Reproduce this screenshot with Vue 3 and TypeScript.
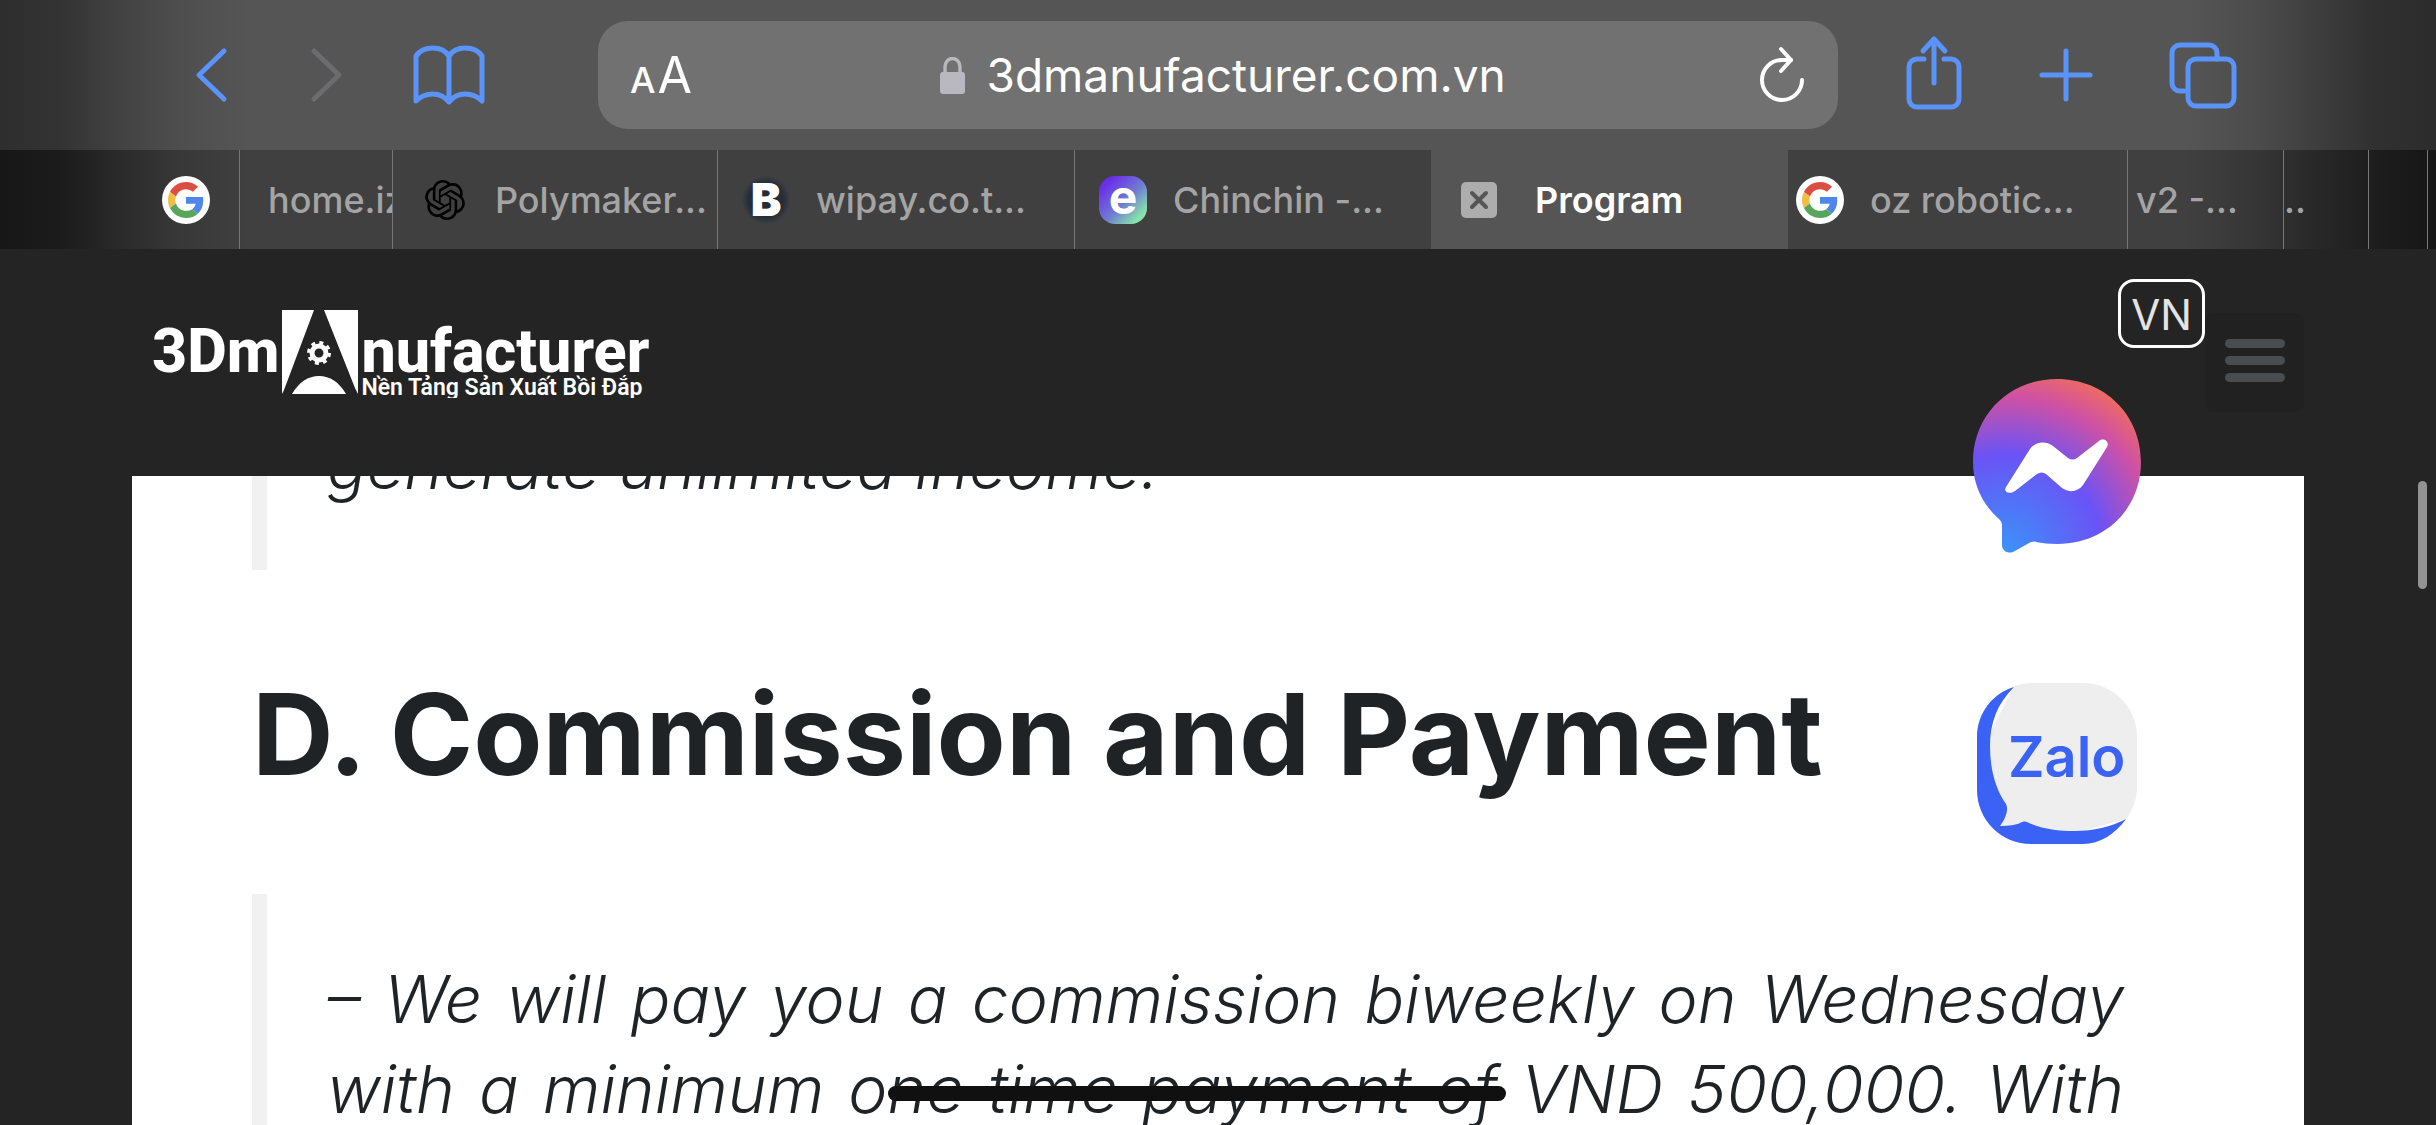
<script setup lang="ts">
interface Tab {
  title: string
  icon?: 'google' | 'openai' | 'b' | 'e' | 'close'
  kind?: string
}

const tabs: Tab[] = [
  { title: '', icon: 'google', kind: 'pinned' },
  { title: 'home.iz', kind: 'cut' },
  { title: 'Polymaker...', icon: 'openai', kind: 'inset' },
  { title: 'wipay.co.t...', icon: 'b' },
  { title: 'Chinchin -...', icon: 'e' },
  { title: 'Program', icon: 'close', kind: 'active' },
  { title: 'oz robotic...', icon: 'google', kind: 'tight' },
  { title: 'v2 -...', kind: 'tight' },
  { title: '..', kind: 'flush' },
  { title: '', kind: 'flush' },
  { title: '', kind: 'flush' },
]

const url = '3dmanufacturer.com.vn'
</script>

<template>
  <div class="screen">
    <header class="toolbar">
      <nav class="group left" aria-label="History">
        <button type="button" aria-label="Back">
          <svg width="40" height="60" viewBox="0 0 40 60"><path d="M32 6 7 30l25 24" /></svg>
        </button>
        <button type="button" aria-label="Forward" class="off" disabled>
          <svg width="40" height="60" viewBox="0 0 40 60"><path d="m7 6 25 24L7 54" /></svg>
        </button>
        <button type="button" aria-label="Bookmarks" class="wide">
          <svg width="76" height="64" viewBox="0 0 76 64">
            <path d="M37 59V13C33 7 27 5 21 5S8 7 4 13v45c4-4 10-7 17-7s12 3 16 8c4-5 9-8 16-8s13 3 17 7V13c-4-6-11-8-17-8s-12 2-16 8" />
          </svg>
        </button>
      </nav>

      <div class="field">
        <button type="button" class="reader" aria-label="Page settings"><span class="small-a">A</span><span class="big-a">A</span></button>
        <label class="address">
          <svg class="lock" width="25" height="37" viewBox="0 0 25 37" aria-hidden="true">
            <rect y="15" width="25" height="22" rx="3" fill="#b9b8bf" />
            <path d="M5 17v-7a7 8 0 0 1 15 0v7" fill="none" stroke="#b9b8bf" stroke-width="3.4" />
          </svg>
          <input type="text" :value="url" aria-label="Address" readonly />
        </label>
        <button type="button" class="reload" aria-label="Reload">
          <svg width="48" height="60" viewBox="0 0 48 60">
            <path d="M44 35a20 20 0 1 1-20-20h9" />
            <path d="m23 4 10 11-10 11" />
          </svg>
        </button>
      </div>

      <nav class="group right" aria-label="Page actions">
        <button type="button" aria-label="Share">
          <svg width="64" height="80" viewBox="0 0 64 80">
            <path d="M22 24h-7a8 8 0 0 0-8 8v32a8 8 0 0 0 8 8h34a8 8 0 0 0 8-8V32a8 8 0 0 0-8-8h-7" />
            <path d="M32 4v44M21 16 32 4l11 12" />
          </svg>
        </button>
        <button type="button" aria-label="New tab">
          <svg width="60" height="60" viewBox="0 0 60 60"><path d="M28 6v48M4 30h48" /></svg>
        </button>
        <button type="button" aria-label="Show tabs">
          <svg width="72" height="72" viewBox="0 0 72 72">
            <path d="M18 52h-4a8 8 0 0 1-8-8V14a8 8 0 0 1 8-8h29a8 8 0 0 1 8 8v6" />
            <rect x="22" y="20" width="46" height="47" rx="8" />
          </svg>
        </button>
      </nav>
    </header>

    <nav class="tabs" aria-label="Open tabs">
      <div v-for="(tab, i) in tabs" :key="i" class="tab" :class="tab.kind">
        <span v-if="tab.icon" class="slot">
          <svg v-if="tab.icon === 'google'" width="48" height="48" viewBox="0 0 48 48" aria-hidden="true">
            <circle cx="24" cy="24" r="24" fill="#fff" />
            <g transform="translate(6 6) scale(.75)">
              <path fill="#dc4e41" d="M24 9.5c3.54 0 6.71 1.22 9.21 3.6l6.85-6.85C35.9 2.38 30.47 0 24 0 14.62 0 6.51 5.38 2.56 13.22l7.98 6.19C12.43 13.72 17.74 9.5 24 9.5z" />
              <path fill="#4f86ec" d="M46.98 24.55c0-1.57-.15-3.09-.38-4.55H24v9.02h12.94c-.58 2.96-2.26 5.48-4.78 7.18l7.73 6c4.51-4.18 7.09-10.36 7.09-17.65z" />
              <path fill="#f2be42" d="M10.53 28.59c-.48-1.45-.76-2.99-.76-4.59s.27-3.14.76-4.59l-7.98-6.19C.92 16.46 0 20.12 0 24c0 3.88.92 7.54 2.56 10.78l7.97-6.19z" />
              <path fill="#58a55c" d="M24 48c6.48 0 11.93-2.13 15.89-5.81l-7.73-6c-2.15 1.45-4.92 2.3-8.16 2.3-6.26 0-11.57-4.22-13.47-9.91l-7.98 6.19C6.51 42.62 14.62 48 24 48z" />
            </g>
          </svg>
          <svg v-else-if="tab.icon === 'openai'" width="40" height="40" viewBox="0 0 24 24" aria-hidden="true">
            <path d="M22.2819 9.8211a5.9847 5.9847 0 0 0-.5157-4.9108 6.0462 6.0462 0 0 0-6.5098-2.9A6.0651 6.0651 0 0 0 4.9807 4.1818a5.9847 5.9847 0 0 0-3.9977 2.9 6.0462 6.0462 0 0 0 .7427 7.0966 5.98 5.98 0 0 0 .511 4.9107 6.051 6.051 0 0 0 6.5146 2.9001A5.9847 5.9847 0 0 0 13.2599 24a6.0557 6.0557 0 0 0 5.7718-4.2058 5.9894 5.9894 0 0 0 3.9977-2.9001 6.0557 6.0557 0 0 0-.7475-7.0729zm-9.022 12.6081a4.4755 4.4755 0 0 1-2.8764-1.0408l.1419-.0804 4.7783-2.7582a.7948.7948 0 0 0 .3927-.6813v-6.7369l2.02 1.1686a.071.071 0 0 1 .038.052v5.5826a4.504 4.504 0 0 1-4.4945 4.4944zm-9.6607-4.1254a4.4708 4.4708 0 0 1-.5346-3.0137l.142.0852 4.783 2.7582a.7712.7712 0 0 0 .7806 0l5.8428-3.3685v2.3324a.0804.0804 0 0 1-.0332.0615L9.74 19.9502a4.4992 4.4992 0 0 1-6.1408-1.6464zM2.3408 7.8956a4.485 4.485 0 0 1 2.3655-1.9728V11.6a.7664.7664 0 0 0 .3879.6765l5.8144 3.3543-2.0201 1.1685a.0757.0757 0 0 1-.071 0l-4.8303-2.7865A4.504 4.504 0 0 1 2.3408 7.8956zm16.5963 3.8558L13.1038 8.364 15.1192 7.2a.0757.0757 0 0 1 .071 0l4.8303 2.7913a4.4944 4.4944 0 0 1-.6765 8.1042v-5.6772a.79.79 0 0 0-.407-.667zm2.0107-3.0231l-.142-.0852-4.7735-2.7818a.7759.7759 0 0 0-.7854 0L9.409 9.2297V6.8974a.0662.0662 0 0 1 .0284-.0615l4.8303-2.7866a4.4992 4.4992 0 0 1 6.6802 4.66zM8.3065 12.863l-2.02-1.1638a.0804.0804 0 0 1-.038-.0567V6.0742a4.4992 4.4992 0 0 1 7.3757-3.4537l-.142.0805L8.704 5.459a.7948.7948 0 0 0-.3927.6813zm1.0976-2.3654l2.602-1.4998 2.6069 1.4998v2.9994l-2.5974 1.4997-2.6067-1.4997Z" />
          </svg>
          <span v-else-if="tab.icon === 'b'" class="badge-b">B</span>
          <span v-else-if="tab.icon === 'e'" class="badge-e">e</span>
          <button v-else type="button" class="close" aria-label="Close tab">
            <svg width="36" height="36" viewBox="0 0 36 36"><path d="m11 11 14 14M25 11 11 25" /></svg>
          </button>
        </span>
        <a v-if="tab.title" href="#" class="title">{{ tab.title }}</a>
      </div>
    </nav>

    <div class="site">
      <header class="site-head">
        <a href="#" class="logo">
          <span class="word">3Dm</span>
          <svg width="76" height="84" viewBox="0 0 76 84" aria-hidden="true">
            <path fill="#fff" d="M0 0h32L2 80 0 84zM42 0h34v84l-3-6z" />
            <path fill="#fff" d="M10 84c7-12 16-18 27-18s20 6 27 18z" />
            <circle cx="37" cy="43" r="7" fill="none" stroke="#fff" stroke-width="5" />
            <circle cx="37" cy="43" r="10.5" fill="none" stroke="#fff" stroke-width="3" stroke-dasharray="4 4.25" />
          </svg>
          <span class="stack">
            <span class="word">nufacturer</span>
            <span class="tagline">Nền Tảng Sản Xuất Bồi Đắp</span>
          </span>
        </a>
        <div class="tools">
          <a href="#" class="lang">VN</a>
          <button type="button" class="menu" aria-label="Menu"><i></i><i></i><i></i></button>
        </div>
      </header>

      <main class="page">
        <blockquote class="first"><p>generate unlimited income.</p></blockquote>
        <h2>D. Commission and Payment</h2>
        <blockquote>
          <p class="full">– We will pay you a commission biweekly on Wednesday</p>
          <p class="full">with a minimum <span class="struck">one time payment of</span> VND 500,000. With</p>
        </blockquote>
      </main>

      <a href="#" class="chat messenger" aria-label="Messenger">
        <svg width="168" height="174" viewBox="0 0 168 174">
          <defs>
            <radialGradient id="msg" gradientUnits="userSpaceOnUse" cx="32" cy="172" r="186">
              <stop offset="0" stop-color="#3b92f8" />
              <stop offset=".52" stop-color="#6a53f6" />
              <stop offset=".83" stop-color="#cf51a4" />
              <stop offset="1" stop-color="#ec6a64" />
            </radialGradient>
          </defs>
          <path fill="url(#msg)" d="M84 0c48 0 84 36 84 83s-36 82-84 82c-8 0-15-1-21-2-2-1-3 0-5 0l-18 10c-5 2-11-1-11-7v-20c0-2-1-4-3-6C9 125 0 105 0 83 0 36 36 0 84 0z" />
          <path fill="#fff" d="M33 108 57 70c5-7 15-9 23-3l15 12c3 2 6 2 9 0l22-17c5-4 11 1 8 6l-24 38c-5 7-14 8-21 3L73 95c-3-2-6-2-9 0l-22 17c-6 4-12 1-9-4z" />
        </svg>
      </a>
      <a href="#" class="chat zalo" aria-label="Zalo chat">
        <svg width="160" height="161" viewBox="0 0 160 161">
          <path fill="#eee" d="M54 0h52a54 54 0 0 1 54 54v53a54 54 0 0 1-11 29L80 155 20 146 8 60 37 3A54 54 0 0 1 54 0z" />
          <path fill="#3a62f5" d="M37 4C20 21 13 40 13 63c0 24 6 44 16 58 3 6-1 16-6 22 9 0 16-1 20-3 4-2 5-2 9 0 14 6 28 8 46 8 18 0 36-4 51-12-11 15-26 25-43 25H54A54 54 0 0 1 0 107V54C0 30 16 10 37 4z" />
          <text x="31" y="94">Zalo</text>
        </svg>
      </a>
      <span class="thumb"></span>
    </div>
  </div>
</template>

<style>
body {
  margin: 0;
  background: #242424;
}
</style>

<style scoped>
.screen {
  display: flex;
  flex-direction: column;
  height: 100vh;
  overflow: hidden;
  background: #242424;
  font-family: Inter, 'Liberation Sans', sans-serif;
}

a {
  color: inherit;
  text-decoration: none;
}

button {
  display: flex;
  align-items: center;
  justify-content: center;
  padding: 0;
  border: 0;
  background: none;
  color: inherit;
  font: inherit;
}

svg {
  display: block;
  flex: none;
}

/* Browser toolbar */
.toolbar {
  display: grid;
  grid-template-columns: 598px 1fr 598px;
  align-items: center;
  flex: none;
  height: 150px;
  background:
    linear-gradient(to right, #2e2e2e, #333 60px, #424242 120px, #4e4e4e 180px, #555 250px, transparent 250px),
    linear-gradient(to left, #2c2c2c, #303030 60px, #3e3e3e 120px, #4c4c4c 180px, #555 250px, transparent 250px),
    #555;
}

.group {
  display: flex;
  align-items: center;
}

.group button {
  width: 80px;
  height: 96px;
}

.group .wide {
  width: 96px;
}

.left {
  gap: 35px;
  padding-left: 172px;
}

.right {
  gap: 54px;
  padding-left: 56px;
}

.toolbar button svg {
  fill: none;
  stroke: #5a93fa;
  stroke-width: 5;
  stroke-linecap: round;
  stroke-linejoin: round;
}

.toolbar .off svg {
  stroke: #6c6c6f;
}

.toolbar .reload svg {
  stroke: #fff;
  stroke-width: 4;
}

.field {
  display: flex;
  align-items: center;
  box-sizing: border-box;
  height: 108px;
  padding: 0 32px;
  border-radius: 30px;
  background: #717171;
  color: #fff;
}

.reader {
  align-items: baseline;
  gap: 2px;
  width: 62px;
}

.small-a {
  font-size: 36px;
  font-weight: 500;
}

.big-a {
  font-size: 50px;
}

.reload {
  justify-content: flex-end;
  width: 52px;
}

.address {
  display: flex;
  flex: 1;
  align-items: center;
  justify-content: center;
  gap: 22px;
}

.address input {
  width: 520px;
  padding: 0;
  border: 0;
  outline: 0;
  background: none;
  color: #fff;
  font: 400 46px/60px Inter, 'Liberation Sans', sans-serif;
}

/* Tab strip */
.tabs {
  display: grid;
  grid-template-columns:
    minmax(0, 240fr) minmax(0, 153fr) minmax(0, 325fr) minmax(0, 357fr) minmax(0, 356fr) minmax(0, 357fr)
    minmax(0, 340fr) minmax(0, 156fr) minmax(0, 85fr) minmax(0, 59fr) minmax(0, 8fr);
  flex: none;
  height: 99px;
  background:
    linear-gradient(to right, #171717, #1b1b1b 60px, #2a2a2a 120px, #383838 180px, #404040 250px, transparent 250px),
    linear-gradient(to left, #161616, #1d1d1d 60px, #282828 120px, #363636 180px, #404040 250px, transparent 250px),
    #404040;
}

.tab {
  display: flex;
  align-items: center;
  gap: 26px;
  box-sizing: border-box;
  min-width: 0;
  overflow: hidden;
  padding-left: 24px;
  border-right: 1px solid #777;
  color: #a4a4a4;
}

.tab:last-child {
  border-right: 0;
}

.pinned {
  padding-left: 162px;
}

.inset,
.cut {
  padding-left: 28px;
}

.tight {
  padding-left: 8px;
}

.flush {
  padding-left: 0;
}

.active {
  gap: 32px;
  border-right: 0;
  background: #555;
  color: #fff;
}

.tab:has(+ .active) {
  border-right: 0;
}

.slot {
  display: flex;
  flex: none;
  align-items: center;
  justify-content: center;
  width: 48px;
  height: 48px;
}

.title {
  font-size: 36px;
  font-weight: 500;
  line-height: 48px;
  white-space: nowrap;
}

.active .title {
  font-weight: 600;
}

.badge-b,
.badge-e {
  width: 48px;
  height: 48px;
  color: #fff;
  text-align: center;
}

.badge-b {
  border-radius: 24px;
  background: radial-gradient(circle, #252b38 50%, #33373f 62%, #3d3e40 70%);
  font: 900 46px/46px Inter, sans-serif;
}

.badge-e {
  border-radius: 16px;
  background: linear-gradient(135deg, #6a2eea 15%, #6f7fd0 55%, #86e3ab 85%);
  font: 700 48px/42px Inter, sans-serif;
}

.close {
  width: 36px;
  height: 36px;
  border-radius: 5px;
  background: #adadad;
}

.close svg {
  stroke: #555;
  stroke-width: 4;
  stroke-linecap: round;
}

/* Web page */
.site {
  position: relative;
  display: flex;
  flex: 1;
  flex-direction: column;
  min-height: 0;
}

.site-head {
  display: flex;
  align-items: flex-start;
  justify-content: space-between;
  flex: none;
  box-sizing: border-box;
  height: 227px;
  padding: 0 132px 0 152px;
  color: #fff;
}

.logo {
  display: flex;
  gap: 3px;
  height: 88px;
  margin-top: 61px;
  overflow: hidden;
  font-family: Roboto, sans-serif;
  font-weight: 800;
}

.word {
  padding-top: 10px;
  font-size: 61px;
  line-height: 62px;
}

.stack {
  display: flex;
  flex-direction: column;
}

.tagline {
  margin-top: -9px;
  font-size: 23px;
  font-weight: 600;
  line-height: 30px;
  white-space: nowrap;
}

.tools {
  display: flex;
  align-items: flex-start;
}

.lang {
  box-sizing: border-box;
  width: 87px;
  height: 69px;
  margin-top: 30px;
  border: 3px solid #fff;
  border-radius: 16px;
  color: #e4e4e4;
  font-size: 42px;
  line-height: 66px;
  text-align: center;
}

.menu {
  flex-direction: column;
  gap: 8px;
  width: 99px;
  height: 99px;
  margin-top: 64px;
  padding-bottom: 4px;
  border-radius: 9px;
  background: #212121;
}

.menu i {
  width: 60px;
  height: 9px;
  border-radius: 5px;
  background: #494d50;
}

.page {
  flex: 1;
  min-height: 0;
  margin: 0 132px;
  padding: 0 120px;
  overflow: hidden;
  background: #fff;
  color: #1f2326;
}

blockquote {
  margin: 0;
  padding: 60px;
  border-left: 15px solid #f1f1f1;
  font-size: 66px;
  font-style: italic;
  font-weight: 300;
  line-height: 90px;
}

.first {
  margin-top: -56px;
  padding-top: 0;
}

p {
  margin: 0;
  white-space: nowrap;
}

.full {
  text-align: justify;
  text-align-last: justify;
  white-space: normal;
}

h2 {
  margin: 98px 0 94px;
  font-size: 113px;
  font-weight: 700;
  line-height: 132px;
  white-space: nowrap;
}

.struck {
  position: relative;
}

.struck::after {
  content: '';
  position: absolute;
  top: 37px;
  right: -9px;
  left: 40px;
  height: 15px;
  border-radius: 8px;
  background: #101010;
}

.chat {
  position: absolute;
}

.messenger {
  top: 130px;
  right: 295px;
}

.zalo {
  top: 434px;
  right: 299px;
}

.zalo text {
  fill: #3a62f5;
  font: 600 56px Inter, sans-serif;
}

.thumb {
  position: absolute;
  top: 232px;
  right: 9px;
  width: 9px;
  height: 108px;
  border-radius: 5px;
  background: #929292;
}
</style>
